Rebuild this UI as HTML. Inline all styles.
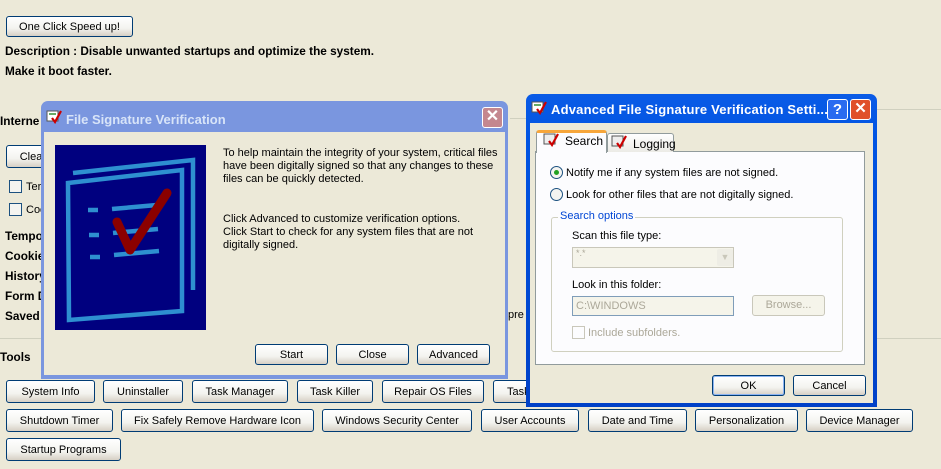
<!DOCTYPE html>
<html><head><style>
*{margin:0;padding:0;box-sizing:border-box}
body{width:941px;height:469px;background:#ECE9D8;position:relative;overflow:hidden;font-family:"Liberation Sans",Arial,sans-serif;font-size:11px;color:#000}
.a{position:absolute;white-space:nowrap}
.btn{position:absolute;height:23px;border:1px solid #003C74;border-radius:3px;background:linear-gradient(#fff,#f3f3ef 60%,#d6d0c5);text-align:center;line-height:22px;font-size:11px;white-space:nowrap;overflow:hidden}
.b{font-weight:bold;font-size:11.8px}
.chk{position:absolute;width:13px;height:13px;border:1px solid #1C5180;background:#f4f4f0}
.ico{position:absolute;width:16px;height:14px}
.t{font-weight:bold;font-size:13px;font-family:"Liberation Sans",Arial,sans-serif}
</style></head><body>
<div class="btn" style="left:6px;top:16px;width:127px;height:21px;line-height:20px">One Click Speed up!</div>
<div class="a b" style="left:5px;top:44px">Description : Disable unwanted startups and optimize the system.</div>
<div class="a b" style="left:5px;top:64px">Make it boot faster.</div>
<div class="a b" style="left:0;top:114px">Interne</div>
<div class="a" style="left:510px;top:118px;width:17px;height:1px;background:#D0D0BF"></div>
<div class="a" style="left:876px;top:109px;width:65px;height:1px;background:#D0D0BF"></div>
<div class="a" style="left:876px;top:338px;width:65px;height:1px;background:#D0D0BF"></div>
<div class="btn" style="left:6px;top:145px;width:50px">Clea</div>
<div class="chk" style="left:9px;top:180px"></div><div class="a" style="left:26px;top:181px">Ter</div>
<div class="chk" style="left:9px;top:203px"></div><div class="a" style="left:26px;top:204px">Coo</div>
<div class="a b" style="left:5px;top:229px">Tempo</div>
<div class="a b" style="left:5px;top:249px">Cookie</div>
<div class="a b" style="left:5px;top:269px">History</div>
<div class="a b" style="left:5px;top:289px">Form D</div>
<div class="a b" style="left:5px;top:309px">Saved</div>
<div class="a" style="left:508px;top:309px">pre</div>
<div class="a" style="left:0;top:338px;width:41px;height:1px;background:#D0D0BF"></div>
<div class="a b" style="left:0;top:350px">Tools</div>

<div class="btn" style="left:6px;top:380px;width:89px">System Info</div>
<div class="btn" style="left:103px;top:380px;width:80px">Uninstaller</div>
<div class="btn" style="left:192px;top:380px;width:96px">Task Manager</div>
<div class="btn" style="left:297px;top:380px;width:76px">Task Killer</div>
<div class="btn" style="left:382px;top:380px;width:102px">Repair OS Files</div>
<div class="btn" style="left:493px;top:380px;width:60px;text-align:left;padding-left:13px">Task</div>
<div class="btn" style="left:6px;top:409px;width:107px">Shutdown Timer</div>
<div class="btn" style="left:121px;top:409px;width:193px">Fix Safely Remove Hardware Icon</div>
<div class="btn" style="left:322px;top:409px;width:150px">Windows Security Center</div>
<div class="btn" style="left:481px;top:409px;width:98px">User Accounts</div>
<div class="btn" style="left:588px;top:409px;width:99px">Date and Time</div>
<div class="btn" style="left:695px;top:409px;width:103px">Personalization</div>
<div class="btn" style="left:806px;top:409px;width:107px">Device Manager</div>
<div class="btn" style="left:6px;top:438px;width:115px">Startup Programs</div>

<div class="a" style="left:41px;top:101px;width:467px;height:278px;background:#7A96DF;border-radius:7px 7px 0 0"></div>
<div class="a" style="left:44px;top:132px;width:461px;height:243px;background:#ECE9D8"></div>
<svg class="ico" style="left:46px;top:110px" viewBox="0 0 16 14"><rect x="1" y="1" width="11" height="10" fill="#fff" stroke="#555"/><rect x="3" y="3" width="7" height="2" fill="#6a6"/><path d="M6 8l3 4 6-11" stroke="#c00" stroke-width="2.2" fill="none"/></svg>
<div class="a t" style="left:66px;top:112px;color:#D8E4F8">File Signature Verification</div>
<div class="a" style="left:482px;top:107px;width:21px;height:21px;border:1px solid #fff;border-radius:3px;background:#C4878F;color:#fff;text-align:center;line-height:18px;font-size:16px;font-weight:bold">✕</div>
<svg class="a" style="left:55px;top:145px" width="151" height="185" viewBox="0 0 151 185">
<rect width="151" height="185" fill="#00007F"/>
<g fill="none" stroke="#2E8FD0" stroke-width="4.5">
<path d="M18 28L138 15V145"/>
<path d="M13 38L127 25V166L14 175Z"/>
<path d="M33 65h10M57 64l45-4M34 90h10M58 88l45-4M35 112h10M59 110l45-4"/>
</g>
<path d="M112 48L75 105L62 77" stroke="#8B0000" stroke-width="9" fill="none" stroke-linecap="round" stroke-linejoin="round"/>
</svg>
<div class="a" style="left:223px;top:147px;line-height:13px;white-space:normal;width:275px">To help maintain the integrity of your system, critical files have been digitally signed so that any changes to these files can be quickly detected.</div>
<div class="a" style="left:223px;top:213px;line-height:13px;white-space:normal;width:275px">Click Advanced to customize verification options.<br>Click Start to check for any system files that are not digitally signed.</div>
<div class="btn" style="left:255px;top:344px;width:73px;height:21px;line-height:20px">Start</div>
<div class="btn" style="left:336px;top:344px;width:73px;height:21px;line-height:20px">Close</div>
<div class="btn" style="left:417px;top:344px;width:73px;height:21px;line-height:20px">Advanced</div>

<div class="a" style="left:526px;top:94px;width:351px;height:313px;background:linear-gradient(#0A5BE6,#0054E3 15%,#0041C8);border-radius:7px 7px 0 0"></div>
<div class="a" style="left:530px;top:123px;width:343px;height:280px;background:#ECE9D8"></div>
<svg class="ico" style="left:531px;top:101px" viewBox="0 0 16 14"><rect x="1" y="1" width="11" height="10" fill="#fff" stroke="#555"/><rect x="3" y="3" width="7" height="2" fill="#6a6"/><path d="M6 8l3 4 6-11" stroke="#c00" stroke-width="2.2" fill="none"/></svg>
<div class="a t" style="left:551px;top:102px;color:#fff;letter-spacing:0.2px">Advanced File Signature Verification Setti...</div>
<div class="a" style="left:827px;top:99px;width:21px;height:21px;border:1px solid #fff;border-radius:3px;background:#2A6BF0;color:#fff;text-align:center;line-height:19px;font-size:15px;font-weight:bold">?</div>
<div class="a" style="left:850px;top:99px;width:21px;height:21px;border:1px solid #fff;border-radius:3px;background:#E0502A;color:#fff;text-align:center;line-height:18px;font-size:15px;font-weight:bold">✕</div>
<div class="a" style="left:535px;top:151px;width:330px;height:214px;background:#FCFCFE;border:1px solid #919B9C"></div>
<div class="a" style="left:536px;top:130px;width:71px;height:23px;background:#FCFCFE;border:1px solid #919B9C;border-top:3px solid #F7A63A;border-bottom:none;border-radius:3px 3px 0 0"></div>
<div class="a" style="left:607px;top:133px;width:67px;height:19px;background:linear-gradient(#fff,#ECEBE6);border:1px solid #919B9C;border-bottom:none;border-radius:3px 3px 0 0"></div>
<svg class="ico" style="left:543px;top:133px" viewBox="0 0 16 14"><rect x="1" y="1" width="11" height="10" fill="#eee" stroke="#555"/><path d="M6 8l3 4 6-11" stroke="#c00" stroke-width="2.2" fill="none"/></svg>
<div class="a" style="left:565px;top:134px;font-size:12px">Search</div>
<svg class="ico" style="left:611px;top:135px" viewBox="0 0 16 14"><rect x="1" y="1" width="11" height="10" fill="#eee" stroke="#555"/><path d="M6 8l3 4 6-11" stroke="#c00" stroke-width="2.2" fill="none"/></svg>
<div class="a" style="left:633px;top:137px;font-size:12px">Logging</div>
<div class="a" style="left:550px;top:166px;width:13px;height:13px;border:1px solid #1C5180;border-radius:50%;background:#f4f4f0"></div>
<div class="a" style="left:554px;top:170px;width:5px;height:5px;border-radius:50%;background:#21A121"></div>
<div class="a" style="left:566px;top:167px">Notify me if any system files are not signed.</div>
<div class="a" style="left:550px;top:188px;width:13px;height:13px;border:1px solid #1C5180;border-radius:50%;background:#f4f4f0"></div>
<div class="a" style="left:566px;top:189px">Look for other files that are not digitally signed.</div>
<div class="a" style="left:551px;top:217px;width:292px;height:135px;border:1px solid #D0D0BF;border-radius:3px"></div>
<div class="a" style="left:558px;top:210px;background:#FCFCFE;color:#0046D5;padding:0 2px">Search options</div>
<div class="a" style="left:572px;top:230px">Scan this file type:</div>
<div class="a" style="left:572px;top:247px;width:162px;height:21px;border:1px solid #C9C7BA;background:#F5F4EA;color:#ACA899;padding-left:3px;font-size:9px">*.*</div>
<div class="a" style="left:717px;top:249px;width:16px;height:17px;background:#EEEDE5;border-radius:2px;color:#C9C7BA;text-align:center;font-size:9px;line-height:17px">▼</div>
<div class="a" style="left:572px;top:279px">Look in this folder:</div>
<div class="a" style="left:572px;top:296px;width:162px;height:20px;border:1px solid #7F9DB9;background:#F5F4EA;color:#ACA899;padding-left:3px;line-height:18px">C:\WINDOWS</div>
<div class="a" style="left:752px;top:295px;width:73px;height:21px;border:1px solid #C9C7BA;border-radius:3px;background:#F5F4EA;color:#ACA899;text-align:center;line-height:19px">Browse...</div>
<div class="a" style="left:572px;top:326px;width:13px;height:13px;border:1px solid #C9C7BA"></div>
<div class="a" style="left:588px;top:327px;color:#ACA899">Include subfolders.</div>
<div class="btn" style="left:712px;top:375px;width:73px;height:21px;line-height:20px;box-shadow:inset 0 0 0 1px #8CB4F2">OK</div>
<div class="btn" style="left:793px;top:375px;width:73px;height:21px;line-height:20px">Cancel</div>
</body></html>
